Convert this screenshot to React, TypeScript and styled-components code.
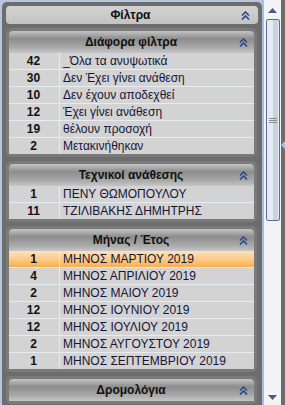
import styled, { createGlobalStyle } from 'styled-components'

type Item = { count: number; label: string; selected?: boolean }
type Group = { title: string; items: Item[] }

const groups: Group[] = [
  {
    title: 'Διάφορα φίλτρα',
    items: [
      { count: 42, label: '_Όλα τα ανυψωτικά' },
      { count: 30, label: 'Δεν Έχει γίνει ανάθεση' },
      { count: 10, label: 'Δεν έχουν αποδεχθεί' },
      { count: 12, label: 'Έχει γίνει ανάθεση' },
      { count: 19, label: 'θέλουν προσοχή' },
      { count: 2, label: 'Μετακινήθηκαν' },
    ],
  },
  {
    title: 'Τεχνικοί ανάθεσης',
    items: [
      { count: 1, label: 'ΠΕΝΥ ΘΩΜΟΠΟΥΛΟΥ' },
      { count: 11, label: 'ΤΖΙΛΙΒΑΚΗΣ ΔΗΜΗΤΡΗΣ' },
    ],
  },
  {
    title: 'Μήνας / Έτος',
    items: [
      { count: 1, label: 'ΜΗΝΟΣ ΜΑΡΤΙΟΥ 2019', selected: true },
      { count: 4, label: 'ΜΗΝΟΣ ΑΠΡΙΛΙΟΥ 2019' },
      { count: 2, label: 'ΜΗΝΟΣ ΜΑΙΟΥ 2019' },
      { count: 12, label: 'ΜΗΝΟΣ ΙΟΥΝΙΟΥ 2019' },
      { count: 12, label: 'ΜΗΝΟΣ ΙΟΥΛΙΟΥ 2019' },
      { count: 2, label: 'ΜΗΝΟΣ ΑΥΓΟΥΣΤΟΥ 2019' },
      { count: 1, label: 'ΜΗΝΟΣ ΣΕΠΤΕΜΒΡΙΟΥ 2019' },
    ],
  },
  { title: 'Δρομολόγια', items: [] },
]

const GlobalStyle = createGlobalStyle`
  html, body {
    margin: 0;
    padding: 0;
    background: #ffffff;
  }
  * {
    box-sizing: border-box;
  }
`

const Frame = styled.div`
  width: 285px;
  height: 405px;
  display: flex;
  overflow: hidden;
  background: #b7c6dc;
  padding: 2px 0 0 2px;
  font-family: 'Liberation Sans', Arial, sans-serif;
`

const Panel = styled.div`
  width: 260px;
  height: 403px;
  background: #6d6d6d;
  border-radius: 5px 5px 0 0;
  padding: 4px 4px 0 4px;
  display: flex;
  flex-direction: column;
  gap: 4px;
  overflow: hidden;
`

const MainHeader = styled.div`
  flex: none;
  height: 18px;
  border-radius: 4px;
  background: linear-gradient(#d2d2d2, #c3c3c3);
  display: flex;
  align-items: center;
  padding: 0 8px 0 14px;
`

const HeaderTitle = styled.div`
  flex: 1;
  text-align: center;
  font-size: 12px;
  font-weight: 700;
  color: #111111;
`

const Section = styled.div`
  flex: none;
  margin-right: 1px;
  background: #7a7a7a;
  border-radius: 5px;
  padding: 3px;
`

const SectionHeader = styled.div`
  height: 22px;
  border-radius: 4px 4px 0 0;
  background: linear-gradient(#c4c4c4 0%, #8d8d8d 35%, #a9a9a9 75%, #c6c6c6 100%);
  display: flex;
  align-items: center;
  padding: 0 6px 0 14px;
`

const Rows = styled.div`
  background: #d3d3d3;
`

const Row = styled.div<{ $selected?: boolean }>`
  display: grid;
  grid-template-columns: 51px 1fr;
  height: 17px;
  border-bottom: 1px solid #e6ebf3;
  background: ${(p) => (p.$selected ? 'linear-gradient(#fde3bb, #fcc77e 60%, #f9ae4c)' : 'transparent')};

  &:last-child {
    border-bottom: none;
    height: 16px;
  }
`

const Count = styled.div`
  border-right: 1px solid #e6ebf3;
  text-align: center;
  font-size: 12px;
  font-weight: 700;
  line-height: 16px;
  color: #111111;
  padding-right: 1px;
`

const Label = styled.div`
  padding-left: 3px;
  font-size: 12px;
  line-height: 16px;
  color: #15153a;
  white-space: nowrap;
`

const Scrollbar = styled.div`
  width: 19px;
  height: 405px;
  margin-top: -2px;
  border-left: 2px solid #a4bde2;
  background: #f3f3f6;
  display: flex;
  flex-direction: column;
  align-items: center;
  padding: 8px 0 5px;
`

const Thumb = styled.div`
  margin-top: 6px;
  width: 14px;
  height: 202px;
  border: 1px solid #5b6b96;
  border-radius: 2px;
  background: linear-gradient(90deg, #e6eaf1 0%, #e6eaf1 50%, #c9d3e1 50%, #c9d3e1 90%, #e6eaf1 90%);
  display: flex;
  align-items: center;
  justify-content: center;
`

const Grip = styled.div`
  width: 8px;
  height: 5px;
  border-top: 1px solid #8a8a8a;
  border-bottom: 1px solid #8a8a8a;
  background: linear-gradient(transparent 1px, #8a8a8a 1px, #8a8a8a 2px, transparent 2px);
`

const Spacer = styled.div`
  flex: 1;
`

const RightEdge = styled.div`
  width: 4px;
  height: 405px;
  margin-top: -2px;
  background: #6d6d6d;
  display: flex;
  flex-direction: column;
  padding-top: 141px;
`

const Chevrons = () => (
  <svg width="9" height="9" viewBox="0 0 9 9">
    <polyline points="1,4.5 4.5,1 8,4.5" fill="none" stroke="#2b4a8a" strokeWidth="1.6" />
    <polyline points="1,8.5 4.5,5 8,8.5" fill="none" stroke="#2b4a8a" strokeWidth="1.6" />
  </svg>
)

const Arrow = ({ down }: { down?: boolean }) => (
  <svg width="9" height="5" viewBox="0 0 9 5">
    <polygon points={down ? '0,0 9,0 4.5,5' : '0,5 9,5 4.5,0'} fill="#4c5a7e" />
  </svg>
)

const App = () => {
  return (
    <>
      <GlobalStyle />
      <Frame>
        <Panel>
          <MainHeader>
            <HeaderTitle>Φίλτρα</HeaderTitle>
            <Chevrons />
          </MainHeader>
          {groups.map((g) => (
            <Section key={g.title}>
              <SectionHeader>
                <HeaderTitle>{g.title}</HeaderTitle>
                <Chevrons />
              </SectionHeader>
              {g.items.length > 0 && (
                <Rows>
                  {g.items.map((it) => (
                    <Row key={it.label} $selected={it.selected}>
                      <Count>{it.count}</Count>
                      <Label>{it.label}</Label>
                    </Row>
                  ))}
                </Rows>
              )}
            </Section>
          ))}
        </Panel>
        <Scrollbar>
          <Arrow />
          <Thumb>
            <Grip />
          </Thumb>
          <Spacer />
          <Arrow down />
        </Scrollbar>
        <RightEdge>
          <svg width="4" height="8" viewBox="0 0 4 8">
            <polygon points="4,0 4,8 0,4" fill="#a4c4ee" />
          </svg>
        </RightEdge>
      </Frame>
    </>
  )
}

export default App
